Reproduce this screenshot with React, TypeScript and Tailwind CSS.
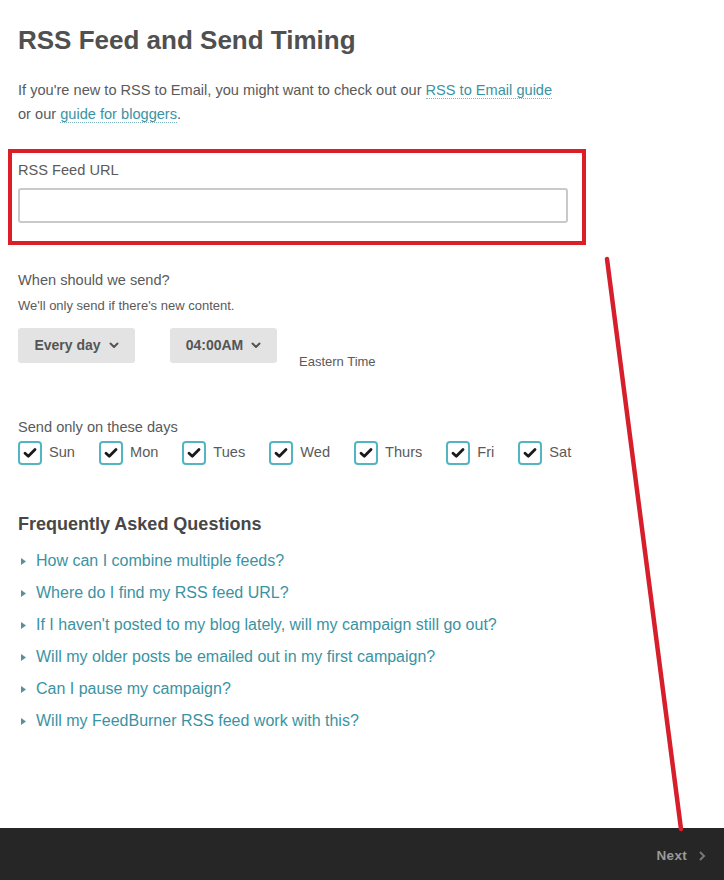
import React from "react";

const days = ["Sun", "Mon", "Tues", "Wed", "Thurs", "Fri", "Sat"];
const faqs = [
  "How can I combine multiple feeds?",
  "Where do I find my RSS feed URL?",
  "If I haven't posted to my blog lately, will my campaign still go out?",
  "Will my older posts be emailed out in my first campaign?",
  "Can I pause my campaign?",
  "Will my FeedBurner RSS feed work with this?",
];

function Chevron() {
  return (
    <svg width="10" height="7" viewBox="0 0 10 7" className="ml-[8px]">
      <path d="M1.5 1.5 L5 5 L8.5 1.5" fill="none" stroke="#555" strokeWidth="2" strokeLinecap="round" strokeLinejoin="round" />
    </svg>
  );
}

function Check() {
  return (
    <span className="flex h-[24px] w-[24px] items-center justify-center rounded-[4px] border-2 border-[#52b6c2] bg-white">
      <svg width="14" height="12" viewBox="0 0 14 12">
        <path d="M2 6.2 L5.3 9.3 L12 2.5" fill="none" stroke="#1a1a1a" strokeWidth="2.8" strokeLinecap="round" strokeLinejoin="round" />
      </svg>
    </span>
  );
}

export default function App() {
  return (
    <div className="relative flex min-h-[880px] w-[724px] flex-col bg-white font-['Liberation_Sans',Arial,sans-serif] text-[#555]">
      <div className="flex-1 pl-[18px]">
        <h1 className="pt-[25px] text-[26px] font-bold leading-[30px] text-[#505050]">RSS Feed and Send Timing</h1>
        <p className="mt-[23px] text-[14.6px] leading-[24px] text-[#5a5a5a]">
          If you're new to RSS to Email, you might want to check out our{" "}
          <span className="border-b border-dotted border-[#7fb8c2] text-[#3a93a3]">RSS to Email guide</span>
          <br />
          or our{" "}
          <span className="border-b border-dotted border-[#7fb8c2] text-[#3a93a3]">guide for bloggers</span>.
        </p>
        <div className="ml-[-10px] mt-[23px] w-[578px] border-4 border-[#dc1f26] pb-[18px] pl-[6px] pt-[8px]">
          <div className="text-[14.6px] leading-[18px] text-[#5a5a5a]">RSS Feed URL</div>
          <div className="mt-[9px] h-[35px] w-[550px] rounded-[3px] border-2 border-[#c9c9c9] bg-white"></div>
        </div>
        <div className="mt-[26px] text-[14.6px] leading-[18px] text-[#5a5a5a]">When should we send?</div>
        <div className="mt-[9px] text-[13px] leading-[16px] text-[#5a5a5a]">We'll only send if there's new content.</div>
        <div className="mt-[14px] flex items-start">
          <div className="flex h-[35px] w-[117px] items-center justify-center rounded-[3px] bg-[#e3e3e3] text-[14px] font-bold text-[#555]">
            Every day<Chevron />
          </div>
          <div className="ml-[35px] flex h-[35px] w-[107px] items-center justify-center rounded-[3px] bg-[#e3e3e3] text-[14px] font-bold text-[#555]">
            04:00AM<Chevron />
          </div>
          <div className="ml-[22px] mt-[26px] text-[13px] leading-[16px] text-[#5a5a5a]">Eastern Time</div>
        </div>
        <div className="mt-[48px] text-[14.6px] leading-[18px] text-[#5a5a5a]">Send only on these days</div>
        <div className="mt-[5px] flex items-center gap-[24px]">
          {days.map((d) => (
            <div key={d} className="flex items-center gap-[7px]">
              <Check />
              <span className="text-[14.6px] text-[#5a5a5a]">{d}</span>
            </div>
          ))}
        </div>
        <h2 className="mt-[48px] text-[18px] font-bold leading-[22px] text-[#474747]">Frequently Asked Questions</h2>
        <ul className="mt-[10px] flex flex-col">
          {faqs.map((q) => (
            <li key={q} className="flex h-[32px] items-center">
              <svg width="5" height="7" viewBox="0 0 5 7" className="ml-[3px] mr-[10px]">
                <path d="M0 0 L5 3.5 L0 7 Z" fill="#5a8fa0" />
              </svg>
              <span className="text-[16px] text-[#3a93a3]">{q}</span>
            </li>
          ))}
        </ul>
      </div>
      <div className="flex h-[52px] items-center justify-end bg-[#262626] pr-[18px]">
        <span className="mt-[4px] text-[13.5px] font-bold tracking-[0.3px] text-[#9a9a9a]">Next</span>
        <svg width="8" height="12" viewBox="0 0 8 12" className="ml-[11px] mt-[4px]">
          <path d="M2 2 L6 6 L2 10" fill="none" stroke="#777" strokeWidth="2" />
        </svg>
      </div>
      <svg className="pointer-events-none absolute left-0 top-0" width="724" height="880">
        <line x1="607" y1="259" x2="681" y2="829" stroke="#d61f2a" strokeWidth="4.5" strokeLinecap="round" />
      </svg>
    </div>
  );
}
